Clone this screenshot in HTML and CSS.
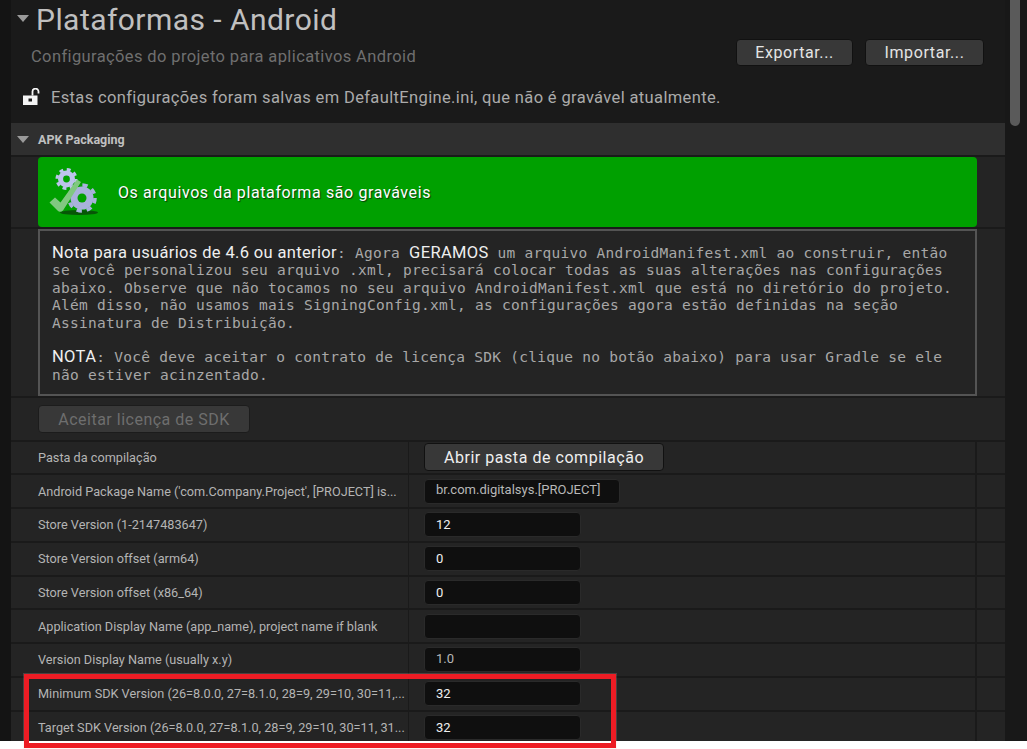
FILE: index.html
```html
<!DOCTYPE html>
<html lang="pt">
<head>
<meta charset="utf-8">
<title>Plataformas - Android</title>
<link rel="stylesheet" href="styles.css">
</head>
<body>
<div class="window">
  <div class="strip"></div>
  <main class="main">
    <header class="head">
      <div class="title-row"><span class="tri tri-big"></span><h1 class="title">Plataformas - Android</h1></div>
      <div class="sub-row">
        <p class="subtitle">Configurações do projeto para aplicativos Android</p>
        <div class="head-btns">
          <button class="btn btn-export">Exportar...</button>
          <button class="btn btn-import">Importar...</button>
        </div>
      </div>
      <div class="lock-row">
        <svg class="lock" width="18" height="18" viewBox="0 0 18 18"><path d="M0 7.500h14.500V17H0z" fill="#f4f4f4"/><path d="M5.500 10.500h3.500v3H5.500z" fill="#1a1a1a"/><path d="M9.500 7.500V3.800a3 3 0 0 1 6-.3v2" fill="none" stroke="#f4f4f4" stroke-width="1.800"/></svg>
        <span class="lock-text">Estas configurações foram salvas em DefaultEngine.ini, que não é gravável atualmente.</span>
      </div>
    </header>
    <div class="section-head"><span class="tri"></span><span class="section-title">APK Packaging</span></div>
    <div class="full-row banner-row">
      <div class="banner">
        <svg class="gears" width="50" height="50" viewBox="0 0 50 50">
          <ellipse cx="31" cy="45.500" rx="19" ry="2.500" fill="#0a3d0a" opacity=".75"/>
          <circle cx="18.500" cy="12" r="8.500" fill="#bcc4ec"/>
          <circle cx="18.500" cy="12" r="9.500" fill="none" stroke="#bcc4ec" stroke-width="3" stroke-dasharray="3.860 3.600"/>
          <circle cx="18.500" cy="12" r="3.400" fill="#00a000"/>
          <circle cx="34" cy="31" r="11.500" fill="#a8b2dc"/>
          <circle cx="34" cy="31" r="13" fill="none" stroke="#a8b2dc" stroke-width="3.600" stroke-dasharray="5.300 4.910"/>
          <circle cx="34" cy="31" r="4.500" fill="#00a000"/>
          <path d="M1.500 35.500 7 30.500l5.500 5L29 12.500l4 2.500L15 43.500q-3 2.500-5.500 0z" fill="#80c880"/>
        </svg>
        <span class="banner-text">Os arquivos da plataforma são graváveis</span>
      </div>
    </div>
    <div class="full-row note-row">
      <div class="note">
        <p class="note-p"><span class="note-strong">Nota para usuários de 4.6 ou anterior</span>: Agora <span class="note-strong">GERAMOS</span> um arquivo AndroidManifest.xml ao construir, então<br>se você personalizou seu arquivo .xml, precisará colocar todas as suas alterações nas configurações<br>abaixo. Observe que não tocamos no seu arquivo AndroidManifest.xml que está no diretório do projeto.<br>Além disso, não usamos mais SigningConfig.xml, as configurações agora estão definidas na seção<br>Assinatura de Distribuição.</p>
        <p class="note-p"><span class="note-strong">NOTA</span>: Você deve aceitar o contrato de licença SDK (clique no botão abaixo) para usar Gradle se ele<br>não estiver acinzentado.</p>
      </div>
    </div>
    <div class="full-row sdk-row"><button class="btn btn-sdk">Aceitar licença de SDK</button></div>
    <div class="row"><div class="name">Pasta da compilação</div><div class="value"><button class="btn btn-open">Abrir pasta de compilação</button></div><div class="extra"></div></div>
    <div class="row"><div class="name">Android Package Name ('com.Company.Project', [PROJECT] is...</div><div class="value"><div class="input input-wide dim up">br.com.digitalsys.[PROJECT]</div></div><div class="extra"></div></div>
    <div class="row"><div class="name">Store Version (1-2147483647)</div><div class="value"><div class="input">12</div></div><div class="extra"></div></div>
    <div class="row"><div class="name">Store Version offset (arm64)</div><div class="value"><div class="input">0</div></div><div class="extra"></div></div>
    <div class="row"><div class="name">Store Version offset (x86_64)</div><div class="value"><div class="input">0</div></div><div class="extra"></div></div>
    <div class="row"><div class="name">Application Display Name (app_name), project name if blank</div><div class="value"><div class="input"></div></div><div class="extra"></div></div>
    <div class="row"><div class="name">Version Display Name (usually x.y)</div><div class="value"><div class="input dim up">1.0</div></div><div class="extra"></div></div>
    <div class="row"><div class="name">Minimum SDK Version (26=8.0.0, 27=8.1.0, 28=9, 29=10, 30=11,...</div><div class="value"><div class="input">32</div></div><div class="extra"></div></div>
    <div class="row"><div class="name">Target SDK Version (26=8.0.0, 27=8.1.0, 28=9, 29=10, 30=11, 31...</div><div class="value"><div class="input">32</div></div><div class="extra"></div></div>
  </main>
  <aside class="scroll"><div class="thumb"></div></aside>
  <div class="highlight"></div>
</div>
</body>
</html>
```
FILE: styles.css
```css
* { box-sizing: border-box; }
html, body { margin: 0; height: 100%; background: #fff; overflow: hidden; }
body { font-family: Roboto, "Liberation Sans", sans-serif; }
.window { position: relative; display: flex; width: 1027px; height: 741px; background: #1a1a1a; }
.strip { width: 11px; background: #141414; flex: none; }
.main { width: 994px; flex: none; height: 741px; overflow: hidden; }
.scroll { flex: 1; background: #181818; padding: 0 7px 0 5px; }
.thumb { height: 126px; background: #5a5a5a; border-radius: 0 0 5px 5px; }
.head { height: 123px; }
.title-row { display: flex; align-items: center; height: 40px; padding-left: 6px; }
.tri { width: 0; height: 0; border-left: 6.500px solid transparent; border-right: 6.500px solid transparent; border-top: 7px solid #9a9a9a; flex: none; }
.tri-big { margin-top: -4px; }
.title { margin: 0 0 0 7px; font-size: 30px; font-weight: 400; color: #c0c0c0; letter-spacing: .45px; line-height: 40px; }
.sub-row { display: flex; justify-content: space-between; align-items: flex-start; height: 37px; padding-left: 20px; }
.subtitle { margin: 7px 0 0; font-size: 16.500px; color: #6f6f6f; line-height: 20px; letter-spacing: .38px; }
.head-btns { display: flex; gap: 12px; margin-right: 21px; margin-top: -1px; }
.btn { font-family: inherit; border: 1px solid #111; background: #383838; color: #e4e4e4; border-radius: 4px; padding: 0; }
.btn-export { width: 117px; height: 27px; font-size: 16px; letter-spacing: .6px; }
.btn-import { width: 119px; height: 27px; font-size: 16px; letter-spacing: .6px; }
.lock-row { display: flex; align-items: center; height: 40px; padding-left: 12px; }
.lock { flex: none; }
.lock-text { margin-left: 10px; font-size: 16.500px; color: #ababab; letter-spacing: .36px; }
.section-head { display: flex; align-items: center; height: 34px; background: #2f2f2f; padding-left: 6px; border-bottom: 2px solid #1a1a1a; }
.section-title { margin-left: 9px; font-size: 12.500px; font-weight: 700; color: #c0c0c0; }
.full-row { background: #242424; padding-left: 27px; border-bottom: 2px solid #1a1a1a; padding-right: 28px; }
.banner-row { height: 72px; }
.banner { display: flex; align-items: center; height: 70px; background: #00a000; border-radius: 4px; padding-left: 10px; }
.gears { flex: none; }
.banner-text { margin-left: 20px; font-size: 16px; color: #fff; text-shadow: 1px 1px 1px #0a3a0a; letter-spacing: .61px; }
.note-row { height: 169px; }
.note { height: 167px; border: 2px solid #545454; padding: 14px 10px 0 12px; font-family: "DejaVu Sans Mono", monospace; font-size: 14.500px; line-height: 17.400px; color: #a8a8a8; white-space: nowrap; letter-spacing: .27px; }
.note-p { margin: 0 0 17.400px; }
.note-strong { font-family: Roboto, sans-serif; font-size: 16.500px; color: #efefef; letter-spacing: .35px; line-height: 1; }
.sdk-row { height: 43.500px; padding-top: 7px; }
.btn-sdk { display: block; width: 212px; height: 28px; font-size: 16px; letter-spacing: .5px; color: #6e6e6e; background: #383838; border-color: #1c1c1c; }
.row { display: grid; grid-template-columns: 398px 568px 28px; height: 33.750px; border-bottom: 2px solid #1a1a1a; background: #242424; }
.name { display: flex; align-items: center; padding-left: 27px; font-size: 12.700px; color: #b4b4b4; white-space: nowrap; border-right: 1px solid #1a1a1a; }
.value { display: flex; align-items: center; padding-left: 15px; border-right: 2px solid #1a1a1a; }
.btn-open { width: 240px; height: 28px; font-size: 16px; color: #efefef; letter-spacing: .54px; }
.input { display: flex; align-items: center; width: 157px; height: 25px; padding-left: 11px; background: #0f0f0f; border: 1px solid #2a2a2a; border-radius: 4px; font-size: 13px; color: #f0f0f0; }
.input-wide { width: 196px; }
.dim { color: #b8b8b8; }
.up { padding-bottom: 3px; }
.highlight { position: absolute; left: 24px; top: 674px; width: 592px; height: 74px; border: 5px solid #ed1c24; box-shadow: 0 0 0 1px rgba(255, 200, 200, .18); }
```
